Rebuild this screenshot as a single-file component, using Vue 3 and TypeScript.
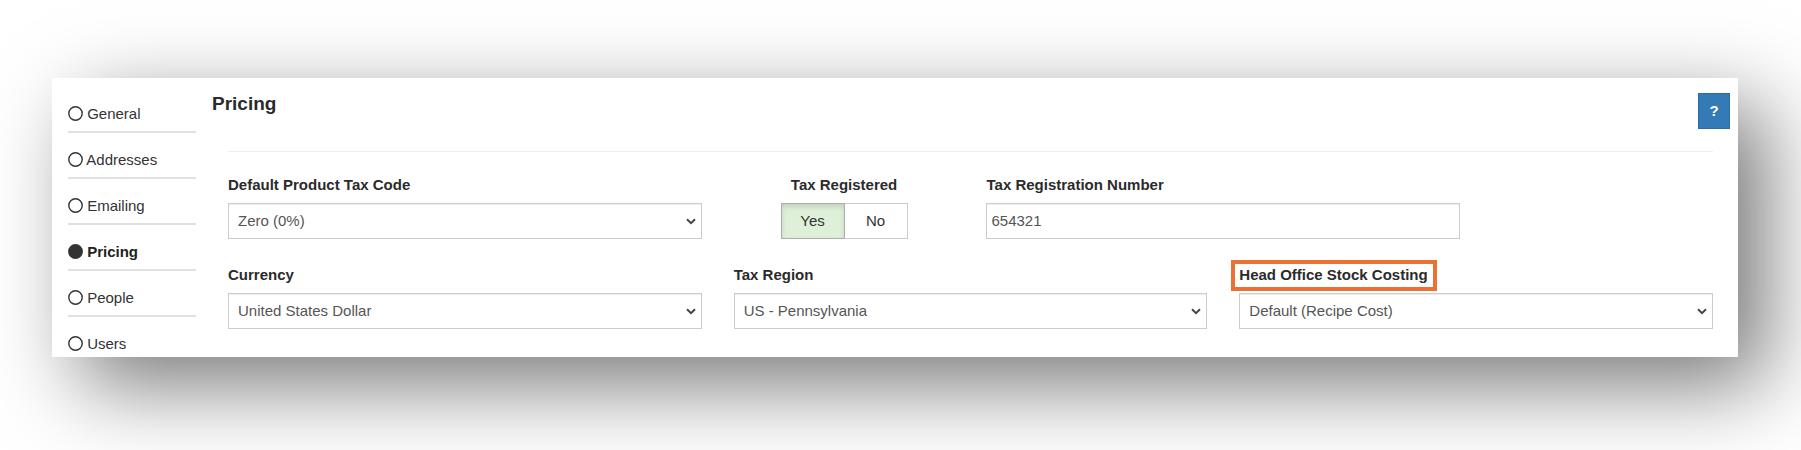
<script setup lang="ts">
import { ref } from 'vue'

const sections: string[] = ['General', 'Addresses', 'Emailing', 'Pricing', 'People', 'Users']
const active = ref<string>('Pricing')

const taxCode = ref<string>('Zero (0%)')
const currency = ref<string>('United States Dollar')
const region = ref<string>('US - Pennsylvania')
const costing = ref<string>('Default (Recipe Cost)')
const taxRegistered = ref<boolean>(true)
const taxNumber = ref<string>('654321')
</script>

<template>
  <div class="page">
    <div class="card">
      <nav class="sidebar" aria-label="Settings sections">
        <ul>
          <li v-for="name in sections" :key="name">
            <a href="#" :class="{ active: name === active }" @click.prevent="active = name">
              <svg class="dot" viewBox="0 0 15 15" aria-hidden="true"><circle cx="7.5" cy="7.5" r="6.7" /></svg>{{ ' ' + name }}
            </a>
          </li>
        </ul>
      </nav>

      <main class="content">
        <header class="top">
          <h1>Pricing</h1>
          <button type="button" class="help">?</button>
        </header>

        <form class="fields" @submit.prevent>
          <div class="field">
            <label for="tax-code">Default Product Tax Code</label>
            <div class="select">
              <select id="tax-code" v-model="taxCode"><option>Zero (0%)</option></select>
              <svg viewBox="0 0 10 7" aria-hidden="true"><path d="M1 1.3 5 5.1 9 1.3" /></svg>
            </div>
          </div>
          <div class="field narrow">
            <span id="registered-label" class="label">Tax Registered</span>
            <div class="toggle" role="group" aria-labelledby="registered-label">
              <button type="button" :class="{ on: taxRegistered }" :aria-pressed="taxRegistered" @click="taxRegistered = true">Yes</button>
              <button type="button" :class="{ on: !taxRegistered }" :aria-pressed="!taxRegistered" @click="taxRegistered = false">No</button>
            </div>
          </div>
          <div class="field">
            <label for="tax-number">Tax Registration Number</label>
            <input id="tax-number" v-model="taxNumber" type="text" />
          </div>
          <div class="field first">
            <label for="currency">Currency</label>
            <div class="select">
              <select id="currency" v-model="currency"><option>United States Dollar</option></select>
              <svg viewBox="0 0 10 7" aria-hidden="true"><path d="M1 1.3 5 5.1 9 1.3" /></svg>
            </div>
          </div>
          <div class="field">
            <label for="region">Tax Region</label>
            <div class="select">
              <select id="region" v-model="region"><option>US - Pennsylvania</option></select>
              <svg viewBox="0 0 10 7" aria-hidden="true"><path d="M1 1.3 5 5.1 9 1.3" /></svg>
            </div>
          </div>
          <div class="field">
            <label for="costing" class="marked">Head Office Stock Costing</label>
            <div class="select">
              <select id="costing" v-model="costing"><option>Default (Recipe Cost)</option></select>
              <svg viewBox="0 0 10 7" aria-hidden="true"><path d="M1 1.3 5 5.1 9 1.3" /></svg>
            </div>
          </div>
        </form>
      </main>
    </div>
  </div>
</template>

<style>
body {
  margin: 0;
  background: #fff;
}
</style>

<style scoped>
* {
  box-sizing: border-box;
}
.page {
  min-height: 100vh;
  padding: 78px 63px 93px 52px;
  overflow: hidden;
  font-family: "Liberation Sans", Arial, sans-serif;
  font-size: 15px;
  line-height: 20px;
  color: #333;
}
.card {
  display: flex;
  gap: 16px;
  padding: 0 8px 0 16px;
  background: #fff;
  box-shadow: 28px 28px 80px rgba(0, 0, 0, 0.53);
}
.sidebar {
  flex: 0 0 128px;
  height: 279px;
  padding-top: 9px;
  overflow: hidden;
}
ul {
  margin: 0;
  padding: 0;
  list-style: none;
}
li {
  height: 46px;
  padding-top: 17px;
  border-bottom: 2px solid #e1e1e1;
}
.sidebar a {
  display: block;
  color: #333;
  text-decoration: none;
}
.sidebar a.active {
  font-weight: 700;
  color: #222;
}
.dot {
  width: 15px;
  height: 15px;
  vertical-align: -2px;
  fill: none;
  stroke: #333;
  stroke-width: 1.4;
}
.active .dot {
  fill: #333;
}
.content {
  flex: 1;
  min-width: 0;
}
.top {
  display: flex;
  justify-content: space-between;
  align-items: flex-start;
  padding-top: 15px;
}
h1 {
  margin: 0;
  font-size: 19px;
  line-height: 22px;
  color: #2b2b2b;
}
button,
select,
input {
  font: inherit;
  border-radius: 0;
}
.help {
  width: 32px;
  height: 36px;
  padding: 0;
  border: 1px solid #2e6da4;
  background: #337ab7;
  color: #fff;
  font-weight: 700;
}
.fields {
  display: grid;
  grid-template-columns: repeat(12, 1fr);
  gap: 26px 32px;
  margin: 22px 17px 0 16px;
  padding-top: 23px;
  border-top: 1px solid #eee;
}
.field {
  grid-column: span 4;
  display: flex;
  flex-direction: column;
  align-items: flex-start;
  gap: 8px;
}
.first {
  grid-column: 1 / span 4;
}
.narrow {
  grid-column: span 2;
  align-items: center;
}
label,
.label {
  font-weight: 700;
  color: #2b2b2b;
}
.marked {
  position: relative;
}
.marked::after {
  content: "";
  position: absolute;
  inset: -5px -9px -6px -8px;
  border: 4px solid #e97132;
}
.select {
  position: relative;
  width: 100%;
}
.select svg {
  position: absolute;
  right: 6px;
  top: 15px;
  width: 10px;
  height: 7px;
  fill: none;
  stroke: #444;
  stroke-width: 2;
  pointer-events: none;
}
select,
input {
  display: block;
  width: 100%;
  height: 36px;
  border: 1px solid #ccc;
  background: #fff;
  color: #555;
  box-shadow: inset 0 1px 1px rgba(0, 0, 0, 0.075);
}
select {
  appearance: none;
  padding: 0 24px 0 9px;
}
input {
  padding: 0 4px 1px;
}
.toggle {
  display: flex;
}
.toggle button {
  width: 64px;
  height: 36px;
  padding: 0;
  border: 1px solid #ccc;
  background: #fff;
  color: #333;
}
.toggle button + button {
  width: 63px;
  border-left: 0;
}
.toggle .on {
  border-color: #adadad;
  background: #dff0d8;
  box-shadow: inset 0 3px 5px rgba(0, 0, 0, 0.125);
}
</style>
